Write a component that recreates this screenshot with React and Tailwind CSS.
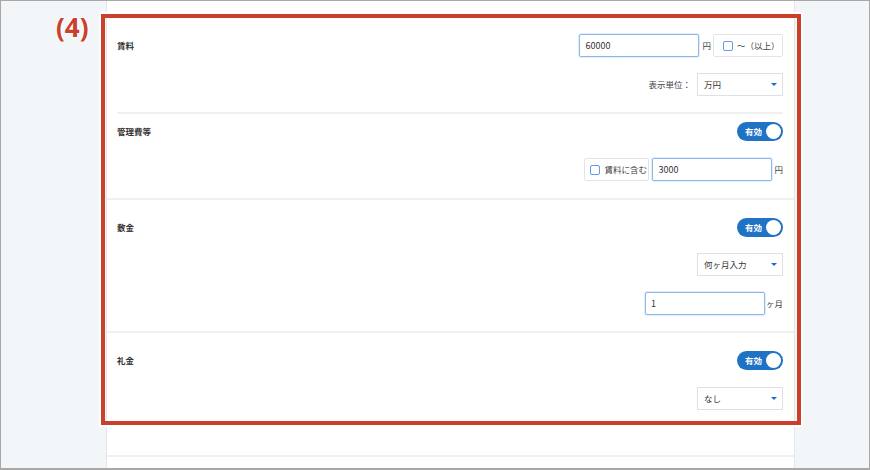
const Toggle = () => (
  <div className="flex h-[19px] w-[46px] items-center justify-between rounded-full bg-[#1f72c4] pl-[8px] pr-[2px]">
    <span className="text-[8.5px] font-bold leading-none text-white">有効</span>
    <span className="h-[15px] w-[15px] rounded-full bg-white" />
  </div>
);

const Select = ({ value }) => (
  <div className="flex h-[23px] w-[86px] items-center justify-between border border-[#dde0e4] bg-white pl-[6px] pr-[5px] text-[8.5px] text-[#333]">
    <span>{value}</span>
    <span className="h-0 w-0 border-x-[3px] border-t-[3px] border-x-transparent border-t-[#1c6cc0]" />
  </div>
);

const Input = ({ value }) => (
  <div className="flex h-[23px] w-[120px] items-center rounded-[2px] border border-[#8db9e8] bg-white pl-[5px] text-[9px] text-[#333] shadow-[0_0_0_1px_rgba(141,185,232,0.25)]">
    {value}
  </div>
);

const CheckButton = ({ label, className }) => (
  <div className={`flex h-[23px] items-center gap-[4px] rounded-[2px] border border-[#e2e4e7] bg-white text-[8.5px] text-[#444] ${className}`}>
    <span className="h-[10px] w-[10px] rounded-[2px] border border-[#5e9de2]" />
    <span>{label}</span>
  </div>
);

const Label = ({ children, h }) => (
  <div className={`flex items-center text-[8.5px] font-bold text-[#333] ${h}`}>{children}</div>
);

export default function App() {
  return (
    <div className="relative h-[470px] w-[870px] overflow-hidden border border-b-2 border-[#a8a8a8] bg-[#f3f6f9] font-['Noto_Sans_CJK_JP',sans-serif]">
      <div className="ml-[105px] h-full w-[689px] border-x border-[#e3e6ea] bg-white">
        {/* 賃料 */}
        <div className="flex justify-between pl-[10px] pr-[11px] pt-[33px] pb-[16px]">
          <Label h="h-[23px]">賃料</Label>
          <div className="flex flex-col items-end gap-[16px]">
            <div className="flex items-center">
              <Input value="60000" />
              <span className="ml-[3px] mr-[2px] text-[8.5px] text-[#444]">円</span>
              <CheckButton label="～（以上）" className="w-[70px] pl-[9px]" />
            </div>
            <div className="flex items-center gap-[6px]">
              <span className="text-[8.5px] text-[#444]">表示単位：</span>
              <Select value="万円" />
            </div>
          </div>
        </div>
        <div className="mx-[10px] mr-[11px] h-[2px] bg-[#eef0f2]" />

        {/* 管理費等 */}
        <div className="flex justify-between border-b-2 border-[#eef0f2] pl-[10px] pr-[11px] pt-[8px] pb-[17px]">
          <Label h="h-[19px]">管理費等</Label>
          <div className="flex flex-col items-end gap-[17px]">
            <Toggle />
            <div className="flex items-center">
              <CheckButton label="賃料に含む" className="mr-[3px] w-[65px] pl-[5px]" />
              <Input value="3000" />
              <span className="ml-[2px] text-[8.5px] text-[#444]">円</span>
            </div>
          </div>
        </div>

        {/* 敷金 */}
        <div className="flex justify-between border-b-2 border-[#eef0f2] pl-[10px] pr-[11px] pt-[18px] pb-[16px]">
          <Label h="h-[19px]">敷金</Label>
          <div className="flex flex-col items-end gap-[16px]">
            <Toggle />
            <Select value="何ヶ月入力" />
            <div className="flex items-center">
              <Input value="1" />
              <span className="ml-[1px] text-[8.5px] text-[#444]">ヶ月</span>
            </div>
          </div>
        </div>

        {/* 礼金 */}
        <div className="flex h-[124px] justify-between border-b-2 border-[#eef0f2] pl-[10px] pr-[11px] pt-[18px]">
          <Label h="h-[19px]">礼金</Label>
          <div className="flex flex-col items-end gap-[17px]">
            <Toggle />
            <Select value="なし" />
          </div>
        </div>
      </div>

      {/* annotation */}
      <div className="absolute left-[100px] top-[13px] h-[411px] w-[700px] border-4 border-[#c9402b] shadow-[0_0_0_2px_white]" />
      <div className="absolute left-[55px] top-[9px] font-['Open_Sans',sans-serif] text-[26px] font-bold leading-[34px] text-[#c9402b] [text-shadow:0_0_2px_white,0_0_2px_white,0_0_3px_white]">
        (4)
      </div>
    </div>
  );
}
